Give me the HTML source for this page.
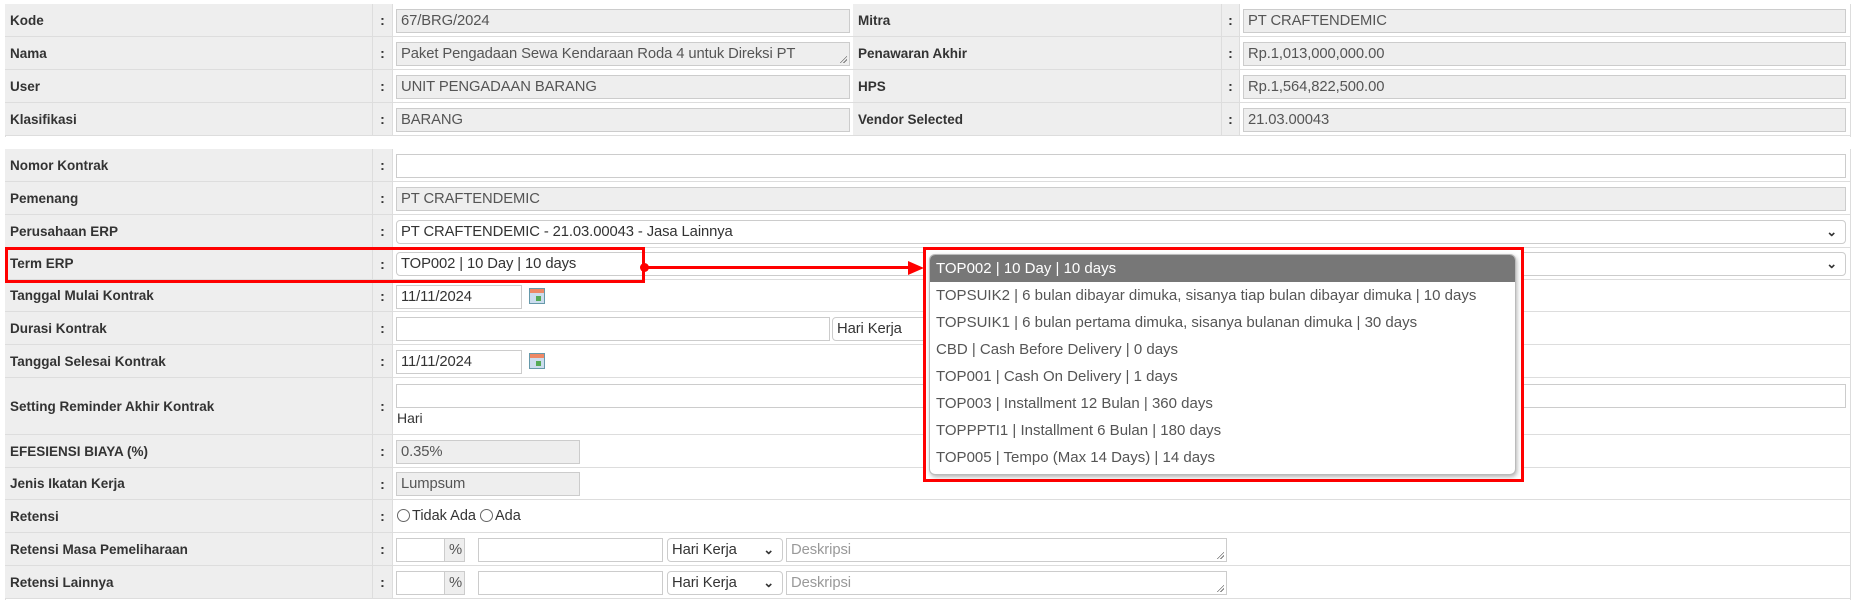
<!DOCTYPE html>
<html><head><meta charset="utf-8"><style>
*{box-sizing:border-box}
body{margin:0;width:1852px;height:603px;background:#fff;font-family:"Liberation Sans",Arial,sans-serif;font-size:14px;color:#333;position:relative;overflow:hidden}
.a{position:absolute}
.lab{background:#eee;font-weight:bold;font-size:13.5px;color:#333;padding-left:5px;display:flex;align-items:center;border-bottom:1px solid #ddd;border-right:1px solid #ddd}
.col{background:#eee;display:flex;align-items:center;justify-content:center;font-weight:bold;border-bottom:1px solid #ddd;border-right:1px solid #ddd}
.val{background:#fff;border-bottom:1px solid #ddd}
.inp{position:absolute;border:1px solid #ccc;background:#fff;height:24px;font-size:14.8px;padding:3px 4px;line-height:17px;color:#555;white-space:nowrap;overflow:hidden;letter-spacing:-0.1px}
.ro{background:#eee}
.sel{border-radius:4px;border-color:#ccc}
.chev{position:absolute;right:8px;top:2px;font-size:13px;font-weight:bold;color:#333}
.opt{height:27px;line-height:27px;padding-left:6px;color:#555;font-size:15px;white-space:nowrap}
.rad{display:inline-block;width:13px;height:13px;border:1px solid #666;border-radius:50%;vertical-align:-2px;margin-right:2px}
.cal{position:absolute;width:16px;height:16px;background:linear-gradient(#e86 0 4px,#cde 4px);border:1px solid #69a}
.cal:after{content:"";position:absolute;left:6px;top:7px;width:5px;height:5px;background:#5a5}
.rs{position:absolute;right:2px;bottom:2px;width:8px;height:8px;background:linear-gradient(135deg,transparent 55%,#777 55%,#777 62%,transparent 62%,transparent 75%,#777 75%,#777 82%,transparent 82%)}
</style></head><body>

<div class="a" style="left:5px;top:4px;width:1846px;height:133px;border:1px solid #ddd;border-bottom:none"></div>
<div class="a lab" style="left:5px;top:4px;width:368px;height:33px">Kode</div>
<div class="a col" style="left:373px;top:4px;width:20px;height:33px">:</div>
<div class="a val" style="left:393px;top:4px;width:460px;height:33px"></div>
<div class="a lab" style="left:853px;top:4px;width:369px;height:33px">Mitra</div>
<div class="a col" style="left:1222px;top:4px;width:18px;height:33px">:</div>
<div class="a val" style="left:1240px;top:4px;width:610px;height:33px"></div>

<div class="a lab" style="left:5px;top:37px;width:368px;height:33px">Nama</div>
<div class="a col" style="left:373px;top:37px;width:20px;height:33px">:</div>
<div class="a val" style="left:393px;top:37px;width:460px;height:33px"></div>
<div class="a lab" style="left:853px;top:37px;width:369px;height:33px">Penawaran Akhir</div>
<div class="a col" style="left:1222px;top:37px;width:18px;height:33px">:</div>
<div class="a val" style="left:1240px;top:37px;width:610px;height:33px"></div>

<div class="a lab" style="left:5px;top:70px;width:368px;height:33px">User</div>
<div class="a col" style="left:373px;top:70px;width:20px;height:33px">:</div>
<div class="a val" style="left:393px;top:70px;width:460px;height:33px"></div>
<div class="a lab" style="left:853px;top:70px;width:369px;height:33px">HPS</div>
<div class="a col" style="left:1222px;top:70px;width:18px;height:33px">:</div>
<div class="a val" style="left:1240px;top:70px;width:610px;height:33px"></div>

<div class="a lab" style="left:5px;top:103px;width:368px;height:33px">Klasifikasi</div>
<div class="a col" style="left:373px;top:103px;width:20px;height:33px">:</div>
<div class="a val" style="left:393px;top:103px;width:460px;height:33px"></div>
<div class="a lab" style="left:853px;top:103px;width:369px;height:33px">Vendor Selected</div>
<div class="a col" style="left:1222px;top:103px;width:18px;height:33px">:</div>
<div class="a val" style="left:1240px;top:103px;width:610px;height:33px"></div>

<div class="inp ro" style="left:396px;top:9px;width:454px">67/BRG/2024</div>
<div class="inp ro" style="left:396px;top:42px;width:454px">Paket Pengadaan Sewa Kendaraan Roda 4 untuk Direksi PT<span class="rs"></span></div>
<div class="inp ro" style="left:396px;top:75px;width:454px">UNIT PENGADAAN BARANG</div>
<div class="inp ro" style="left:396px;top:108px;width:454px">BARANG</div>
<div class="inp ro" style="left:1243px;top:9px;width:603px">PT CRAFTENDEMIC</div>
<div class="inp ro" style="left:1243px;top:42px;width:603px">Rp.1,013,000,000.00</div>
<div class="inp ro" style="left:1243px;top:75px;width:603px">Rp.1,564,822,500.00</div>
<div class="inp ro" style="left:1243px;top:108px;width:603px">21.03.00043</div>

<div class="a" style="left:5px;top:149px;width:1846px;height:451px;border:1px solid #ddd;border-bottom:none"></div>
<div class="a lab" style="left:5px;top:149px;width:368px;height:33px">Nomor Kontrak</div>
<div class="a lab" style="left:5px;top:182px;width:368px;height:33px">Pemenang</div>
<div class="a lab" style="left:5px;top:215px;width:368px;height:33px">Perusahaan ERP</div>
<div class="a lab" style="left:5px;top:248px;width:368px;height:32px">Term ERP</div>
<div class="a lab" style="left:5px;top:280px;width:368px;height:32px">Tanggal Mulai Kontrak</div>
<div class="a lab" style="left:5px;top:312px;width:368px;height:33px">Durasi Kontrak</div>
<div class="a lab" style="left:5px;top:345px;width:368px;height:33px">Tanggal Selesai Kontrak</div>
<div class="a lab" style="left:5px;top:378px;width:368px;height:57px">Setting Reminder Akhir Kontrak</div>
<div class="a lab" style="left:5px;top:435px;width:368px;height:33px">EFESIENSI BIAYA (%)</div>
<div class="a lab" style="left:5px;top:468px;width:368px;height:32px">Jenis Ikatan Kerja</div>
<div class="a lab" style="left:5px;top:500px;width:368px;height:33px">Retensi</div>
<div class="a lab" style="left:5px;top:533px;width:368px;height:33px">Retensi Masa Pemeliharaan</div>
<div class="a lab" style="left:5px;top:566px;width:368px;height:33px">Retensi Lainnya</div>

<div class="a col" style="left:373px;top:149px;width:20px;height:33px">:</div>
<div class="a col" style="left:373px;top:182px;width:20px;height:33px">:</div>
<div class="a col" style="left:373px;top:215px;width:20px;height:33px">:</div>
<div class="a col" style="left:373px;top:248px;width:20px;height:32px">:</div>
<div class="a col" style="left:373px;top:280px;width:20px;height:32px">:</div>
<div class="a col" style="left:373px;top:312px;width:20px;height:33px">:</div>
<div class="a col" style="left:373px;top:345px;width:20px;height:33px">:</div>
<div class="a col" style="left:373px;top:378px;width:20px;height:57px">:</div>
<div class="a col" style="left:373px;top:435px;width:20px;height:33px">:</div>
<div class="a col" style="left:373px;top:468px;width:20px;height:32px">:</div>
<div class="a col" style="left:373px;top:500px;width:20px;height:33px">:</div>
<div class="a col" style="left:373px;top:533px;width:20px;height:33px">:</div>
<div class="a col" style="left:373px;top:566px;width:20px;height:33px">:</div>

<div class="a val" style="left:393px;top:149px;width:1457px;height:33px"></div>
<div class="a val" style="left:393px;top:182px;width:1457px;height:33px"></div>
<div class="a val" style="left:393px;top:215px;width:1457px;height:33px"></div>
<div class="a val" style="left:393px;top:248px;width:1457px;height:32px"></div>
<div class="a val" style="left:393px;top:280px;width:1457px;height:32px"></div>
<div class="a val" style="left:393px;top:312px;width:1457px;height:33px"></div>
<div class="a val" style="left:393px;top:345px;width:1457px;height:33px"></div>
<div class="a val" style="left:393px;top:378px;width:1457px;height:57px"></div>
<div class="a val" style="left:393px;top:435px;width:1457px;height:33px"></div>
<div class="a val" style="left:393px;top:468px;width:1457px;height:32px"></div>
<div class="a val" style="left:393px;top:500px;width:1457px;height:33px"></div>
<div class="a val" style="left:393px;top:533px;width:1457px;height:33px"></div>
<div class="a val" style="left:393px;top:566px;width:1457px;height:33px"></div>

<div class="inp" style="left:396px;top:154px;width:1450px"></div>
<div class="inp ro" style="left:396px;top:187px;width:1450px">PT CRAFTENDEMIC</div>
<div class="inp sel" style="left:396px;top:220px;width:1450px;color:#333">PT CRAFTENDEMIC - 21.03.00043 - Jasa Lainnya<span class="chev">&#8964;</span></div>
<div class="inp sel" style="left:396px;top:252px;width:1450px;color:#333">TOP002 | 10 Day | 10 days<span class="chev">&#8964;</span></div>
<div class="inp" style="left:396px;top:285px;width:126px;color:#333">11/11/2024</div>
<div class="cal" style="left:529px;top:288px"></div>
<div class="inp" style="left:396px;top:317px;width:434px"></div>
<div class="inp sel" style="left:832px;top:317px;width:130px;color:#333">Hari Kerja</div>
<div class="inp" style="left:396px;top:350px;width:126px;color:#333">11/11/2024</div>
<div class="cal" style="left:529px;top:353px"></div>
<div class="inp" style="left:396px;top:384px;width:1450px"></div>
<div class="a" style="left:397px;top:410px;font-size:14px;color:#333">Hari</div>
<div class="inp ro" style="left:396px;top:440px;width:184px">0.35%</div>
<div class="inp ro" style="left:396px;top:472px;width:184px">Lumpsum</div>
<div class="a" style="left:397px;top:508px;font-size:14.5px;color:#333"><span class="rad"></span>Tidak Ada <span class="rad"></span>Ada</div>

<div class="inp" style="left:396px;top:538px;width:49px"></div>
<div class="inp ro" style="left:444px;top:538px;width:21px;padding:3px 4px">%</div>
<div class="inp" style="left:478px;top:538px;width:185px"></div>
<div class="inp sel" style="left:667px;top:538px;width:116px;color:#333">Hari Kerja<span class="chev">&#8964;</span></div>
<div class="inp" style="left:786px;top:538px;width:441px;color:#999">Deskripsi<span class="rs"></span></div>

<div class="inp" style="left:396px;top:571px;width:49px"></div>
<div class="inp ro" style="left:444px;top:571px;width:21px;padding:3px 4px">%</div>
<div class="inp" style="left:478px;top:571px;width:185px"></div>
<div class="inp sel" style="left:667px;top:571px;width:116px;color:#333">Hari Kerja<span class="chev">&#8964;</span></div>
<div class="inp" style="left:786px;top:571px;width:441px;color:#999">Deskripsi<span class="rs"></span></div>

<div class="a" style="left:5px;top:247px;width:640px;height:36px;border:3px solid #f00"></div>
<div class="a" style="left:643px;top:266px;width:270px;height:3px;background:#f00"></div>
<div class="a" style="left:640px;top:263px;width:9px;height:9px;border-radius:50%;background:#f00"></div>
<div class="a" style="left:908px;top:261px;width:0;height:0;border-top:7px solid transparent;border-bottom:7px solid transparent;border-left:16px solid #f00"></div>

<div class="a" style="left:923px;top:247px;width:601px;height:235px;border:3px solid #f00;background:#fff"></div>
<div class="a" style="left:929px;top:254px;width:587px;height:221px;background:#fff;border:1px solid #bbb;border-radius:6px;box-shadow:1px 2px 4px rgba(0,0,0,.3);overflow:hidden">
<div class="opt" style="background:#777;color:#fff">TOP002 | 10 Day | 10 days</div>
<div class="opt">TOPSUIK2 | 6 bulan dibayar dimuka, sisanya tiap bulan dibayar dimuka | 10 days</div>
<div class="opt">TOPSUIK1 | 6 bulan pertama dimuka, sisanya bulanan dimuka | 30 days</div>
<div class="opt">CBD | Cash Before Delivery | 0 days</div>
<div class="opt">TOP001 | Cash On Delivery | 1 days</div>
<div class="opt">TOP003 | Installment 12 Bulan | 360 days</div>
<div class="opt">TOPPPTI1 | Installment 6 Bulan | 180 days</div>
<div class="opt">TOP005 | Tempo (Max 14 Days) | 14 days</div>
</div>
</body></html>
